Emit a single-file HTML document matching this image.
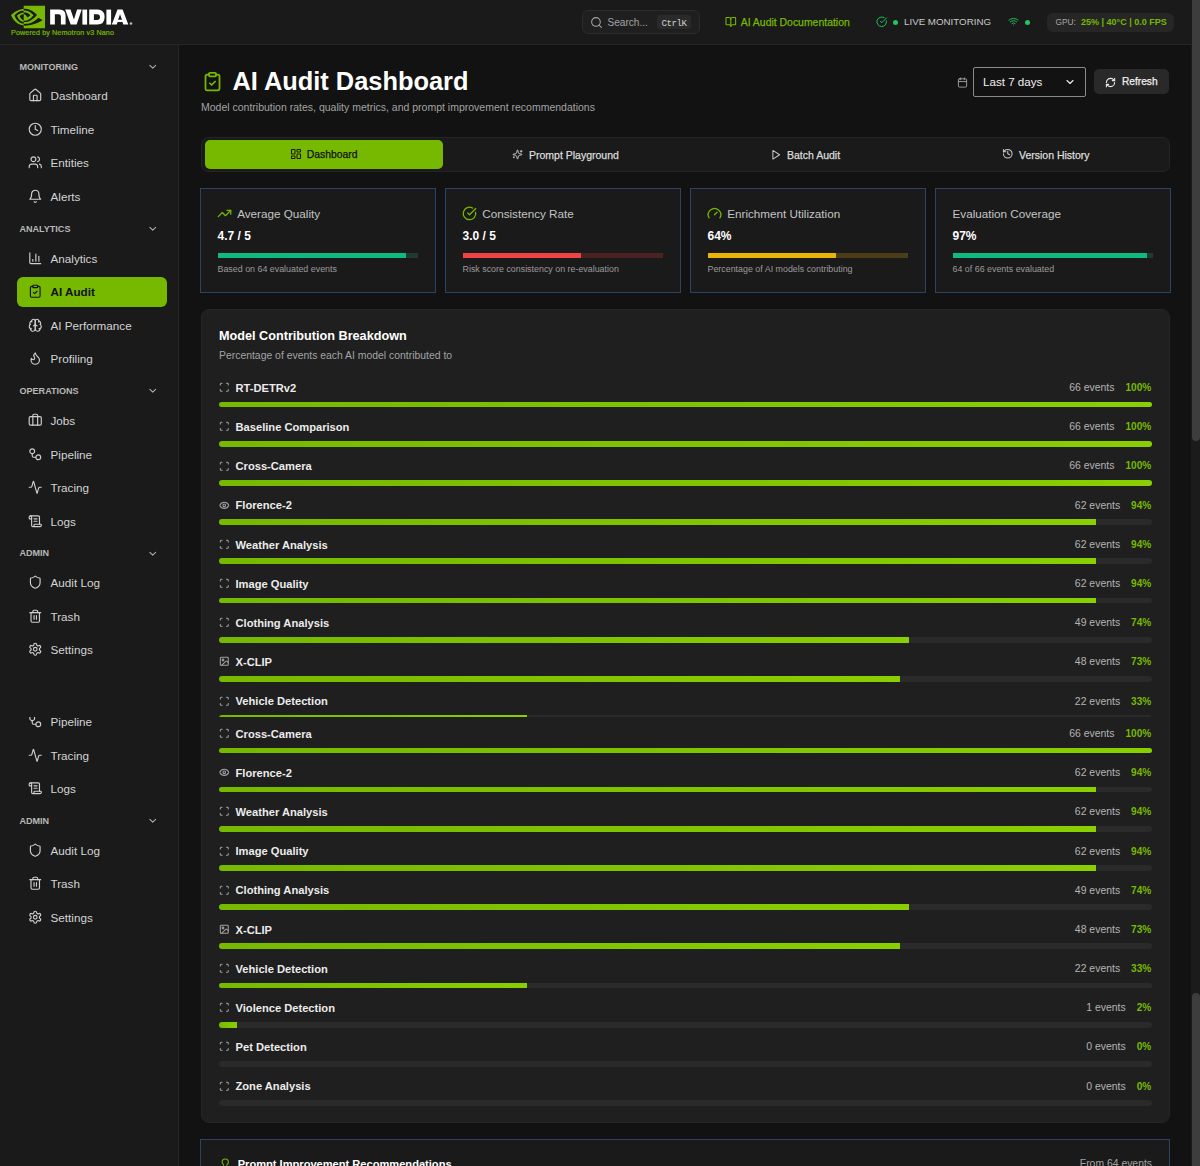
<!DOCTYPE html>
<html><head><meta charset="utf-8">
<style>
*{box-sizing:border-box;margin:0;padding:0}
html,body{width:1200px;height:1166px;overflow:hidden;background:#121212;font-family:"Liberation Sans",sans-serif}
.box,.t,.ic{position:absolute}
.t{white-space:nowrap}
.ic{overflow:visible}
.clip{position:absolute;left:0;width:1191px;overflow:hidden}
.page{position:absolute;left:0;width:1191px;height:1500px}
</style></head><body>
<div class="clip" style="top:0;height:717px"><div class="page" style="top:0">
<div class="box" style="left:0;top:0;width:1191px;height:45px;background:#1a1a1a;border-bottom:1px solid #262626"></div>
<svg class="ic" style="left:11px;top:-0.5px;width:34px;height:34px" viewBox="0 0 24 24"><path fill="#76b900" d="M8.948 8.798v-1.43a6.7 6.7 0 0 1 .424-.018c3.922-.124 6.493 3.374 6.493 3.374s-2.774 3.851-5.75 3.851c-.398 0-.787-.062-1.158-.185v-4.346c1.528.185 1.837.857 2.747 2.385l2.04-1.714s-1.492-1.952-4-1.952a6.016 6.016 0 0 0-.796.035m0-4.735v2.138l.424-.027c5.45-.185 9.010 4.470 9.010 4.470s-4.080 4.964-8.330 4.964c-.37 0-.733-.035-1.095-.097v1.325c.3.035.61.062.91.062 3.957 0 6.820-2.023 9.593-4.408.459.371 2.340 1.263 2.730 1.652-2.633 2.208-8.772 3.984-12.253 3.984-.335 0-.653-.018-.971-.053v1.864H24V4.063zm0 10.326v1.131c-3.657-.654-4.673-4.460-4.673-4.460s1.758-1.944 4.673-2.262v1.237H8.940c-1.528-.186-2.730 1.245-2.730 1.245s.68 2.412 2.739 3.110M2.456 10.900s2.164-3.197 6.500-3.533V6.201C4.153 6.590 0 10.653 0 10.653s2.350 6.802 8.948 7.420v-1.237c-4.840-.6-6.492-5.936-6.492-5.936z"/></svg>
<svg class="ic" style="left:0;top:0;width:140px;height:40px" viewBox="0 0 140 40"><g fill="#ffffff" fill-rule="evenodd"><path d="M50.15 9.6H59.4Q65.6 9.6 65.6 15.8V24.6H60.9V16.4Q60.9 14.2 58.7 14.2H54.85V24.6H50.15Z"/><path d="M65.2 9.6H70.5L73.95 19.6L77.1 9.6H81.7L76.6 24.6H70.7Z"/><rect x="82.4" y="9.6" width="4.7" height="15"/><path d="M89.2 9.6H97.4Q104.6 9.6 104.6 17.1Q104.6 24.6 97.4 24.6H89.2ZM93.9 14.2V20H97.2Q100 20 100 17.1Q100 14.2 97.2 14.2Z"/><rect x="106.4" y="9.6" width="4.7" height="15"/><path d="M111.8 24.6L117.5 9.6H122.6L128.3 24.6H123.3L122.5 22H117.6L116.8 24.6ZM118.1 19.8H122L120.05 14.2Z"/></g><circle cx="131" cy="23.5" r="1.3" fill="#bbbbbb"/></svg>
<div class="t" style="left:11px;top:29.21px;font-size:7.2px;line-height:7.2px;color:#76b900;font-weight:normal;-webkit-text-stroke:0.2px #76b900;letter-spacing:0.1px">Powered by Nemotron v3 Nano</div>
<div class="box" style="left:582px;top:10px;width:118px;height:24px;background:#1f1f1f;border:1px solid #2c2c2c;border-radius:6px"></div>
<svg class="ic" style="left:589.5px;top:15.5px;width:13px;height:13px" viewBox="0 0 24 24" fill="none" stroke="#a3a3a3" stroke-width="1.9" stroke-linecap="round" stroke-linejoin="round"><circle cx="11" cy="11" r="8"/><path d="m21 21-4.3-4.3"/></svg>
<div class="t" style="left:607.5px;top:17.52px;font-size:10.1px;line-height:10.1px;color:#a3a3a3;font-weight:normal">Search...</div>
<div class="box" style="left:657px;top:15px;width:34px;height:14px;background:#2a2a2a;border-radius:3px"></div>
<div class="t" style="left:661.5px;top:18.68px;font-size:9.2px;line-height:9.2px;color:#cfcfcf;font-weight:normal;font-family:'Liberation Mono',monospace;letter-spacing:-0.5px">CtrlK</div>
<svg class="ic" style="left:724.6px;top:16.2px;width:11.6px;height:11.6px" viewBox="0 0 24 24" fill="none" stroke="#76b900" stroke-width="2.2" stroke-linecap="round" stroke-linejoin="round"><path d="M12 7v14"/><path d="M3 18a1 1 0 0 1-1-1V4a1 1 0 0 1 1-1h5a4 4 0 0 1 4 4 4 4 0 0 1 4-4h5a1 1 0 0 1 1 1v13a1 1 0 0 1-1 1h-6a3 3 0 0 0-3 3 3 3 0 0 0-3-3z"/></svg>
<div class="t" style="left:740.7px;top:17.55px;font-size:10.45px;line-height:10.45px;color:#76b900;font-weight:normal;-webkit-text-stroke:0.25px #76b900">AI Audit Documentation</div>
<svg class="ic" style="left:875.5px;top:16px;width:11.5px;height:11.5px" viewBox="0 0 24 24" fill="none" stroke="#22c55e" stroke-width="2" stroke-linecap="round" stroke-linejoin="round"><path d="M21.801 10A10 10 0 1 1 17 3.335"/><path d="m9 11 3 3L22 4"/></svg>
<div class="box" style="left:893px;top:19.5px;width:5px;height:5px;border-radius:50%;background:#22c55e"></div>
<div class="t" style="left:904px;top:17.10px;font-size:9.75px;line-height:9.75px;color:#c8c8c8;font-weight:normal">LIVE MONITORING</div>
<svg class="ic" style="left:1007.5px;top:16px;width:11px;height:11px" viewBox="0 0 24 24" fill="none" stroke="#22c55e" stroke-width="2" stroke-linecap="round" stroke-linejoin="round"><path d="M12 20h.01"/><path d="M2 8.82a15 15 0 0 1 20 0"/><path d="M5 12.859a10 10 0 0 1 14 0"/><path d="M8.5 16.429a5 5 0 0 1 7 0"/></svg>
<div class="box" style="left:1024.5px;top:19.5px;width:5px;height:5px;border-radius:50%;background:#22c55e"></div>
<div class="box" style="left:1047px;top:12.5px;width:127px;height:19px;background:#262626;border-radius:6px"></div>
<div class="t" style="left:1055.5px;top:17.83px;font-size:8.3px;line-height:8.3px;color:#a8a8a8;font-weight:normal">GPU:</div>
<div class="t" style="left:1081px;top:18.18px;font-size:9px;line-height:9px;color:#76b900;font-weight:bold">25% | 40°C | 0.0 FPS</div>
<div class="box" style="left:0;top:45px;width:179px;height:1400px;background:#1a1a1a;border-right:1px solid #272727"></div>
<div class="t" style="left:19.5px;top:62.95px;font-size:9.06px;line-height:9.06px;color:#b8b8b8;font-weight:bold;letter-spacing:0px">MONITORING</div>
<svg class="ic" style="left:147.3px;top:61.199999999999996px;width:11.5px;height:11.5px" viewBox="0 0 24 24" fill="none" stroke="#b0b0b0" stroke-width="2.2" stroke-linecap="round" stroke-linejoin="round"><path d="m6 9 6 6 6-6"/></svg>
<svg class="ic" style="left:27.5px;top:88.39999999999999px;width:14.5px;height:14.5px" viewBox="0 0 24 24" fill="none" stroke="#cfcfcf" stroke-width="1.9" stroke-linecap="round" stroke-linejoin="round"><path d="M15 21v-8a1 1 0 0 0-1-1h-4a1 1 0 0 0-1 1v8"/><path d="M3 10a2 2 0 0 1 .709-1.528l7-5.999a2 2 0 0 1 2.582 0l7 5.999A2 2 0 0 1 21 10v9a2 2 0 0 1-2 2H5a2 2 0 0 1-2-2z"/></svg>
<div class="t" style="left:50.5px;top:90.42px;font-size:11.7px;line-height:11.7px;color:#d4d4d4;font-weight:normal">Dashboard</div>
<svg class="ic" style="left:27.5px;top:121.9px;width:14.5px;height:14.5px" viewBox="0 0 24 24" fill="none" stroke="#cfcfcf" stroke-width="1.9" stroke-linecap="round" stroke-linejoin="round"><circle cx="12" cy="12" r="10"/><polyline points="12 6 12 12 16 14"/></svg>
<div class="t" style="left:50.5px;top:123.92px;font-size:11.7px;line-height:11.7px;color:#d4d4d4;font-weight:normal">Timeline</div>
<svg class="ic" style="left:27.5px;top:155.4px;width:14.5px;height:14.5px" viewBox="0 0 24 24" fill="none" stroke="#cfcfcf" stroke-width="1.9" stroke-linecap="round" stroke-linejoin="round"><path d="M16 21v-2a4 4 0 0 0-4-4H6a4 4 0 0 0-4 4v2"/><circle cx="9" cy="7" r="4"/><path d="M22 21v-2a4 4 0 0 0-3-3.87"/><path d="M16 3.13a4 4 0 0 1 0 7.75"/></svg>
<div class="t" style="left:50.5px;top:157.42px;font-size:11.7px;line-height:11.7px;color:#d4d4d4;font-weight:normal">Entities</div>
<svg class="ic" style="left:27.5px;top:188.9px;width:14.5px;height:14.5px" viewBox="0 0 24 24" fill="none" stroke="#cfcfcf" stroke-width="1.9" stroke-linecap="round" stroke-linejoin="round"><path d="M6 8a6 6 0 0 1 12 0c0 7 3 9 3 9H3s3-2 3-9"/><path d="M10.3 21a1.94 1.94 0 0 0 3.4 0"/></svg>
<div class="t" style="left:50.5px;top:190.92px;font-size:11.7px;line-height:11.7px;color:#d4d4d4;font-weight:normal">Alerts</div>
<div class="t" style="left:19.5px;top:225.05px;font-size:9.06px;line-height:9.06px;color:#b8b8b8;font-weight:bold;letter-spacing:0px">ANALYTICS</div>
<svg class="ic" style="left:147.3px;top:223.3px;width:11.5px;height:11.5px" viewBox="0 0 24 24" fill="none" stroke="#b0b0b0" stroke-width="2.2" stroke-linecap="round" stroke-linejoin="round"><path d="m6 9 6 6 6-6"/></svg>
<svg class="ic" style="left:27.5px;top:250.99999999999997px;width:14.5px;height:14.5px" viewBox="0 0 24 24" fill="none" stroke="#cfcfcf" stroke-width="1.9" stroke-linecap="round" stroke-linejoin="round"><path d="M3 3v16a2 2 0 0 0 2 2h16"/><path d="M18 17V9"/><path d="M13 17V5"/><path d="M8 17v-3"/></svg>
<div class="t" style="left:50.5px;top:253.02px;font-size:11.7px;line-height:11.7px;color:#d4d4d4;font-weight:normal">Analytics</div>
<div class="box" style="left:17px;top:276.6px;width:150px;height:30.6px;background:#76b900;border-radius:6px"></div>
<svg class="ic" style="left:27.5px;top:284.40000000000003px;width:14.5px;height:14.5px" viewBox="0 0 24 24" fill="none" stroke="#111" stroke-width="1.9" stroke-linecap="round" stroke-linejoin="round"><rect width="8" height="4" x="8" y="2" rx="1" ry="1"/><path d="M16 4h2a2 2 0 0 1 2 2v14a2 2 0 0 1-2 2H6a2 2 0 0 1-2-2V6a2 2 0 0 1 2-2h2"/><path d="m9 14 2 2 4-4"/></svg>
<div class="t" style="left:50.5px;top:286.42px;font-size:11.7px;line-height:11.7px;color:#111;font-weight:bold">AI Audit</div>
<svg class="ic" style="left:27.5px;top:317.90000000000003px;width:14.5px;height:14.5px" viewBox="0 0 24 24" fill="none" stroke="#cfcfcf" stroke-width="1.9" stroke-linecap="round" stroke-linejoin="round"><path d="M12 5a3 3 0 1 0-5.997.125 4 4 0 0 0-2.526 5.77 4 4 0 0 0 .556 6.588A4 4 0 1 0 12 18Z"/><path d="M12 5a3 3 0 1 1 5.997.125 4 4 0 0 1 2.526 5.77 4 4 0 0 1-.556 6.588A4 4 0 1 1 12 18Z"/><path d="M15 13a4.5 4.5 0 0 1-3-4 4.5 4.5 0 0 1-3 4"/><path d="M17.599 6.5a3 3 0 0 0 .399-1.375"/><path d="M6.003 5.125A3 3 0 0 0 6.401 6.5"/><path d="M3.477 10.896a4 4 0 0 1 .585-.396"/><path d="M19.938 10.5a4 4 0 0 1 .585.396"/><path d="M6 18a4 4 0 0 1-1.967-.516"/><path d="M19.967 17.484A4 4 0 0 1 18 18"/></svg>
<div class="t" style="left:50.5px;top:319.92px;font-size:11.7px;line-height:11.7px;color:#d4d4d4;font-weight:normal">AI Performance</div>
<svg class="ic" style="left:27.5px;top:351.3px;width:14.5px;height:14.5px" viewBox="0 0 24 24" fill="none" stroke="#cfcfcf" stroke-width="1.9" stroke-linecap="round" stroke-linejoin="round"><path d="M8.5 14.5A2.5 2.5 0 0 0 11 12c0-1.38-.5-2-1-3-1.072-2.143-.224-4.054 2-6 .5 2.5 2 4.9 4 6.5 2 1.6 3 3.5 3 5.5a7 7 0 1 1-14 0c0-1.153.433-2.294 1-3a2.5 2.5 0 0 0 2.5 2.5z"/></svg>
<div class="t" style="left:50.5px;top:353.32px;font-size:11.7px;line-height:11.7px;color:#d4d4d4;font-weight:normal">Profiling</div>
<div class="t" style="left:19.5px;top:387.15px;font-size:9.06px;line-height:9.06px;color:#b8b8b8;font-weight:bold;letter-spacing:0px">OPERATIONS</div>
<svg class="ic" style="left:147.3px;top:385.4px;width:11.5px;height:11.5px" viewBox="0 0 24 24" fill="none" stroke="#b0b0b0" stroke-width="2.2" stroke-linecap="round" stroke-linejoin="round"><path d="m6 9 6 6 6-6"/></svg>
<svg class="ic" style="left:27.5px;top:413.20000000000005px;width:14.5px;height:14.5px" viewBox="0 0 24 24" fill="none" stroke="#cfcfcf" stroke-width="1.9" stroke-linecap="round" stroke-linejoin="round"><path d="M16 20V4a2 2 0 0 0-2-2h-4a2 2 0 0 0-2 2v16"/><rect width="20" height="14" x="2" y="6" rx="2"/></svg>
<div class="t" style="left:50.5px;top:415.22px;font-size:11.7px;line-height:11.7px;color:#d4d4d4;font-weight:normal">Jobs</div>
<svg class="ic" style="left:27.5px;top:446.8px;width:14.5px;height:14.5px" viewBox="0 0 24 24" fill="none" stroke="#cfcfcf" stroke-width="1.9" stroke-linecap="round" stroke-linejoin="round"><rect width="8" height="8" x="3" y="3" rx="4"/><path d="M7 11v4a2 2 0 0 0 2 2h4"/><rect width="8" height="8" x="13" y="13" rx="4"/></svg>
<div class="t" style="left:50.5px;top:448.82px;font-size:11.7px;line-height:11.7px;color:#d4d4d4;font-weight:normal">Pipeline</div>
<svg class="ic" style="left:27.5px;top:480.40000000000003px;width:14.5px;height:14.5px" viewBox="0 0 24 24" fill="none" stroke="#cfcfcf" stroke-width="1.9" stroke-linecap="round" stroke-linejoin="round"><path d="M22 12h-2.48a2 2 0 0 0-1.93 1.46l-2.35 8.36a.25.25 0 0 1-.48 0L9.24 2.18a.25.25 0 0 0-.48 0l-2.35 8.36A2 2 0 0 1 4.49 12H2"/></svg>
<div class="t" style="left:50.5px;top:482.42px;font-size:11.7px;line-height:11.7px;color:#d4d4d4;font-weight:normal">Tracing</div>
<svg class="ic" style="left:27.5px;top:513.8000000000001px;width:14.5px;height:14.5px" viewBox="0 0 24 24" fill="none" stroke="#cfcfcf" stroke-width="1.9" stroke-linecap="round" stroke-linejoin="round"><path d="M15 12h-5"/><path d="M15 8h-5"/><path d="M19 17V5a2 2 0 0 0-2-2H4"/><path d="M8 21h12a2 2 0 0 0 2-2v-1a1 1 0 0 0-1-1H11a1 1 0 0 0-1 1v1a2 2 0 1 1-4 0V5a2 2 0 1 0-4 0v2a1 1 0 0 0 1 1h3"/></svg>
<div class="t" style="left:50.5px;top:515.82px;font-size:11.7px;line-height:11.7px;color:#d4d4d4;font-weight:normal">Logs</div>
<div class="t" style="left:19.5px;top:549.25px;font-size:9.06px;line-height:9.06px;color:#b8b8b8;font-weight:bold;letter-spacing:0px">ADMIN</div>
<svg class="ic" style="left:147.3px;top:547.5px;width:11.5px;height:11.5px" viewBox="0 0 24 24" fill="none" stroke="#b0b0b0" stroke-width="2.2" stroke-linecap="round" stroke-linejoin="round"><path d="m6 9 6 6 6-6"/></svg>
<svg class="ic" style="left:27.5px;top:575.2px;width:14.5px;height:14.5px" viewBox="0 0 24 24" fill="none" stroke="#cfcfcf" stroke-width="1.9" stroke-linecap="round" stroke-linejoin="round"><path d="M20 13c0 5-3.5 7.5-7.66 8.95a1 1 0 0 1-.67-.01C7.5 20.5 4 18 4 13V6a1 1 0 0 1 1-1c2 0 4.5-1.2 6.24-2.72a1.17 1.17 0 0 1 1.52 0C14.510 3.81 17 5 19 5a1 1 0 0 1 1 1z"/></svg>
<div class="t" style="left:50.5px;top:577.22px;font-size:11.7px;line-height:11.7px;color:#d4d4d4;font-weight:normal">Audit Log</div>
<svg class="ic" style="left:27.5px;top:608.9px;width:14.5px;height:14.5px" viewBox="0 0 24 24" fill="none" stroke="#cfcfcf" stroke-width="1.9" stroke-linecap="round" stroke-linejoin="round"><path d="M3 6h18"/><path d="M19 6v14c0 1-1 2-2 2H7c-1 0-2-1-2-2V6"/><path d="M8 6V4c0-1 1-2 2-2h4c1 0 2 1 2 2v2"/><line x1="10" x2="10" y1="11" y2="17"/><line x1="14" x2="14" y1="11" y2="17"/></svg>
<div class="t" style="left:50.5px;top:610.92px;font-size:11.7px;line-height:11.7px;color:#d4d4d4;font-weight:normal">Trash</div>
<svg class="ic" style="left:27.5px;top:642.2px;width:14.5px;height:14.5px" viewBox="0 0 24 24" fill="none" stroke="#cfcfcf" stroke-width="1.9" stroke-linecap="round" stroke-linejoin="round"><path d="M12.22 2h-.44a2 2 0 0 0-2 2v.18a2 2 0 0 1-1 1.730l-.43.25a2 2 0 0 1-2 0l-.15-.08a2 2 0 0 0-2.73.73l-.22.38a2 2 0 0 0 .73 2.73l.15.1a2 2 0 0 1 1 1.72v.51a2 2 0 0 1-1 1.74l-.15.09a2 2 0 0 0-.73 2.73l.22.38a2 2 0 0 0 2.73.73l.15-.08a2 2 0 0 1 2 0l.43.25a2 2 0 0 1 1 1.73V20a2 2 0 0 0 2 2h.44a2 2 0 0 0 2-2v-.18a2 2 0 0 1 1-1.73l.43-.25a2 2 0 0 1 2 0l.15.08a2 2 0 0 0 2.73-.73l.22-.39a2 2 0 0 0-.73-2.73l-.15-.08a2 2 0 0 1-1-1.74v-.5a2 2 0 0 1 1-1.74l.15-.09a2 2 0 0 0 .73-2.73l-.22-.38a2 2 0 0 0-2.73-.73l-.15.08a2 2 0 0 1-2 0l-.43-.25a2 2 0 0 1-1-1.73V4a2 2 0 0 0-2-2z"/><circle cx="12" cy="12" r="3"/></svg>
<div class="t" style="left:50.5px;top:644.22px;font-size:11.7px;line-height:11.7px;color:#d4d4d4;font-weight:normal">Settings</div>
<svg class="ic" style="left:202px;top:70.5px;width:21px;height:21px" viewBox="0 0 24 24" fill="none" stroke="#76b900" stroke-width="2" stroke-linecap="round" stroke-linejoin="round"><rect width="8" height="4" x="8" y="2" rx="1" ry="1"/><path d="M16 4h2a2 2 0 0 1 2 2v14a2 2 0 0 1-2 2H6a2 2 0 0 1-2-2V6a2 2 0 0 1 2-2h2"/><path d="m9 14 2 2 4-4"/></svg>
<div class="t" style="left:232.4px;top:68.70px;font-size:25.4px;line-height:25.4px;color:#ffffff;font-weight:bold">AI Audit Dashboard</div>
<div class="t" style="left:201px;top:101.72px;font-size:10.5px;line-height:10.5px;color:#a3a3a3;font-weight:normal">Model contribution rates, quality metrics, and prompt improvement recommendations</div>
<svg class="ic" style="left:956.5px;top:76.5px;width:11px;height:11px" viewBox="0 0 24 24" fill="none" stroke="#a3a3a3" stroke-width="2" stroke-linecap="round" stroke-linejoin="round"><path d="M8 2v4"/><path d="M16 2v4"/><rect width="18" height="18" x="3" y="4" rx="2"/><path d="M3 10h18"/></svg>
<div class="box" style="left:973px;top:67px;width:113px;height:30px;border:1px solid #8a8a8a;border-radius:2px;background:#121212"></div>
<div class="t" style="left:983px;top:76.17px;font-size:11.6px;line-height:11.6px;color:#f0f0f0;font-weight:normal">Last 7 days</div>
<svg class="ic" style="left:1063.5px;top:76px;width:12px;height:12px" viewBox="0 0 24 24" fill="none" stroke="#e8e8e8" stroke-width="2.3" stroke-linecap="round" stroke-linejoin="round"><path d="m6 9 6 6 6-6"/></svg>
<div class="box" style="left:1094px;top:69px;width:75px;height:25px;background:#292929;border-radius:5px"></div>
<svg class="ic" style="left:1105px;top:76.5px;width:11px;height:11px" viewBox="0 0 24 24" fill="none" stroke="#e8e8e8" stroke-width="2.4" stroke-linecap="round" stroke-linejoin="round"><path d="M3 12a9 9 0 0 1 9-9 9.75 9.75 0 0 1 6.74 2.74L21 8"/><path d="M21 3v5h-5"/><path d="M21 12a9 9 0 0 1-9 9 9.75 9.75 0 0 1-6.74-2.74L3 16"/><path d="M8 16H3v5"/></svg>
<div class="t" style="left:1122px;top:77.39px;font-size:10.17px;line-height:10.17px;color:#f0f0f0;font-weight:normal;-webkit-text-stroke:0.25px #f0f0f0">Refresh</div>
<div class="box" style="left:201px;top:137px;width:969px;height:35px;background:#1a1a1a;border:1px solid #242424;border-radius:7px"></div>
<div class="box" style="left:205px;top:140px;width:238px;height:28.5px;background:#76b900;border-radius:5px"></div>
<svg class="ic" style="left:289.5px;top:148px;width:12px;height:12px" viewBox="0 0 24 24" fill="none" stroke="#1a1a1a" stroke-width="2.1" stroke-linecap="round" stroke-linejoin="round"><rect width="7" height="9" x="3" y="3" rx="1"/><rect width="7" height="5" x="14" y="3" rx="1"/><rect width="7" height="9" x="14" y="12" rx="1"/><rect width="7" height="5" x="3" y="16" rx="1"/></svg>
<div class="t" style="left:306.7px;top:149.58px;font-size:10.38px;line-height:10.38px;color:#111111;font-weight:normal;-webkit-text-stroke:0.25px #111">Dashboard</div>
<svg class="ic" style="left:511.5px;top:148.5px;width:11px;height:11px" viewBox="0 0 24 24" fill="none" stroke="#c8c8c8" stroke-width="2" stroke-linecap="round" stroke-linejoin="round"><path d="M9.937 15.5A2 2 0 0 0 8.5 14.063l-6.135-1.582a.5.5 0 0 1 0-.962L8.5 9.936A2 2 0 0 0 9.937 8.5l1.582-6.135a.5.5 0 0 1 .963 0L14.063 8.5A2 2 0 0 0 15.5 9.937l6.135 1.581a.5.5 0 0 1 0 .964L15.5 14.063a2 2 0 0 0-1.437 1.437l-1.582 6.135a.5.5 0 0 1-.963 0z"/><path d="M20 3v4"/><path d="M22 5h-4"/><path d="M4 17v2"/><path d="M5 18H3"/></svg>
<div class="t" style="left:529px;top:149.52px;font-size:10.5px;line-height:10.5px;color:#dcdcdc;font-weight:normal;-webkit-text-stroke:0.25px #dcdcdc">Prompt Playground</div>
<svg class="ic" style="left:770px;top:148.5px;width:11.5px;height:11.5px" viewBox="0 0 24 24" fill="none" stroke="#c8c8c8" stroke-width="2.1" stroke-linecap="round" stroke-linejoin="round"><polygon points="6 3 20 12 6 21 6 3"/></svg>
<div class="t" style="left:787px;top:149.52px;font-size:10.5px;line-height:10.5px;color:#dcdcdc;font-weight:normal;-webkit-text-stroke:0.25px #dcdcdc">Batch Audit</div>
<svg class="ic" style="left:1002px;top:148.3px;width:11.5px;height:11.5px" viewBox="0 0 24 24" fill="none" stroke="#c8c8c8" stroke-width="2.2" stroke-linecap="round" stroke-linejoin="round"><path d="M3 12a9 9 0 1 0 9-9 9.75 9.75 0 0 0-6.74 2.74L3 8"/><path d="M3 3v5h5"/><path d="M12 7v5l4 2"/></svg>
<div class="t" style="left:1019px;top:149.52px;font-size:10.5px;line-height:10.5px;color:#dcdcdc;font-weight:normal;-webkit-text-stroke:0.25px #dcdcdc">Version History</div>
<div class="box" style="left:200px;top:188px;width:235.5px;height:105px;background:#1a1a1a;border:1px solid #2a4466"></div>
<svg class="ic" style="left:217.2px;top:206px;width:15px;height:15px" viewBox="0 0 24 24" fill="none" stroke="#76b900" stroke-width="2" stroke-linecap="round" stroke-linejoin="round"><polyline points="22 7 13.5 15.5 8.5 10.5 2 17"/><polyline points="16 7 22 7 22 13"/></svg>
<div class="t" style="left:237.2px;top:207.92px;font-size:11.7px;line-height:11.7px;color:#c4c4c4;font-weight:normal">Average Quality</div>
<div class="t" style="left:217.5px;top:229.97px;font-size:12px;line-height:12px;color:#ffffff;font-weight:bold">4.7 / 5</div>
<div class="box" style="left:217.5px;top:252.6px;width:200px;height:5.7px;background:#1f3b31"><div style="width:94%;height:5.7px;background:#10b981"></div></div>
<div class="t" style="left:217.5px;top:265.13px;font-size:8.9px;line-height:8.9px;color:#9a9a9a;font-weight:normal">Based on 64 evaluated events</div>
<div class="box" style="left:445px;top:188px;width:235.5px;height:105px;background:#1a1a1a;border:1px solid #2a4466"></div>
<svg class="ic" style="left:462.2px;top:206px;width:15px;height:15px" viewBox="0 0 24 24" fill="none" stroke="#76b900" stroke-width="2" stroke-linecap="round" stroke-linejoin="round"><path d="M21.801 10A10 10 0 1 1 17 3.335"/><path d="m9 11 3 3L22 4"/></svg>
<div class="t" style="left:482.2px;top:207.92px;font-size:11.7px;line-height:11.7px;color:#c4c4c4;font-weight:normal">Consistency Rate</div>
<div class="t" style="left:462.5px;top:229.97px;font-size:12px;line-height:12px;color:#ffffff;font-weight:bold">3.0 / 5</div>
<div class="box" style="left:462.5px;top:252.6px;width:200px;height:5.7px;background:#4a2222"><div style="width:59%;height:5.7px;background:#ef4444"></div></div>
<div class="t" style="left:462.5px;top:265.13px;font-size:8.9px;line-height:8.9px;color:#9a9a9a;font-weight:normal">Risk score consistency on re-evaluation</div>
<div class="box" style="left:690px;top:188px;width:235.5px;height:105px;background:#1a1a1a;border:1px solid #2a4466"></div>
<svg class="ic" style="left:707.2px;top:206px;width:15px;height:15px" viewBox="0 0 24 24" fill="none" stroke="#76b900" stroke-width="2" stroke-linecap="round" stroke-linejoin="round"><path d="m12 14 4-4"/><path d="M3.34 19a10 10 0 1 1 17.32 0"/></svg>
<div class="t" style="left:727.2px;top:207.92px;font-size:11.7px;line-height:11.7px;color:#c4c4c4;font-weight:normal">Enrichment Utilization</div>
<div class="t" style="left:707.5px;top:229.97px;font-size:12px;line-height:12px;color:#ffffff;font-weight:bold">64%</div>
<div class="box" style="left:707.5px;top:252.6px;width:200px;height:5.7px;background:#4a3d17"><div style="width:64%;height:5.7px;background:#eab308"></div></div>
<div class="t" style="left:707.5px;top:265.13px;font-size:8.9px;line-height:8.9px;color:#9a9a9a;font-weight:normal">Percentage of AI models contributing</div>
<div class="box" style="left:935px;top:188px;width:235.5px;height:105px;background:#1a1a1a;border:1px solid #2a4466"></div>
<div class="t" style="left:952.5px;top:207.92px;font-size:11.7px;line-height:11.7px;color:#c4c4c4;font-weight:normal">Evaluation Coverage</div>
<div class="t" style="left:952.5px;top:229.97px;font-size:12px;line-height:12px;color:#ffffff;font-weight:bold">97%</div>
<div class="box" style="left:952.5px;top:252.6px;width:200px;height:5.7px;background:#1f3b31"><div style="width:97%;height:5.7px;background:#10b981"></div></div>
<div class="t" style="left:952.5px;top:265.13px;font-size:8.9px;line-height:8.9px;color:#9a9a9a;font-weight:normal">64 of 66 events evaluated</div>
<div class="box" style="left:201px;top:309px;width:969px;height:546px;background:#1f1f1f;border:1px solid #252525;border-radius:8px"></div>
<div class="t" style="left:219px;top:330.13px;font-size:12.67px;line-height:12.67px;color:#ffffff;font-weight:bold">Model Contribution Breakdown</div>
<div class="t" style="left:219px;top:351.26px;font-size:10.42px;line-height:10.42px;color:#a3a3a3;font-weight:normal">Percentage of events each AI model contributed to</div>
<svg class="ic" style="left:218.7px;top:382.2px;width:10.6px;height:10.6px" viewBox="0 0 24 24" fill="none" stroke="#a0a0a0" stroke-width="2.4" stroke-linecap="round" stroke-linejoin="round"><path d="M3 7V5a2 2 0 0 1 2-2h2"/><path d="M17 3h2a2 2 0 0 1 2 2v2"/><path d="M21 17v2a2 2 0 0 1-2 2h-2"/><path d="M7 21H5a2 2 0 0 1-2-2v-2"/></svg>
<div class="t" style="left:235.5px;top:382.90px;font-size:11.15px;line-height:11.15px;color:#ececec;font-weight:bold">RT-DETRv2</div>
<div class="t" style="right:39.700000000000045px;top:383.15px;font-size:10.45px;line-height:10.45px;display:flex;gap:11px"><span style="color:#b4b4b4">66 events</span><span style="color:#76b900;font-weight:bold;font-size:10.1px">100%</span></div>
<div class="box" style="left:218.5px;top:401.80px;width:933.5px;height:5.7px;background:#2a2a2a;border-radius:3px;overflow:hidden"><div style="width:100%;height:5.7px;background:linear-gradient(to right,#76b900,#8acf00)"></div></div>
<svg class="ic" style="left:218.7px;top:421.37px;width:10.6px;height:10.6px" viewBox="0 0 24 24" fill="none" stroke="#a0a0a0" stroke-width="2.4" stroke-linecap="round" stroke-linejoin="round"><path d="M3 7V5a2 2 0 0 1 2-2h2"/><path d="M17 3h2a2 2 0 0 1 2 2v2"/><path d="M21 17v2a2 2 0 0 1-2 2h-2"/><path d="M7 21H5a2 2 0 0 1-2-2v-2"/></svg>
<div class="t" style="left:235.5px;top:422.07px;font-size:11.15px;line-height:11.15px;color:#ececec;font-weight:bold">Baseline Comparison</div>
<div class="t" style="right:39.700000000000045px;top:422.32px;font-size:10.45px;line-height:10.45px;display:flex;gap:11px"><span style="color:#b4b4b4">66 events</span><span style="color:#76b900;font-weight:bold;font-size:10.1px">100%</span></div>
<div class="box" style="left:218.5px;top:440.97px;width:933.5px;height:5.7px;background:#2a2a2a;border-radius:3px;overflow:hidden"><div style="width:100%;height:5.7px;background:linear-gradient(to right,#76b900,#8acf00)"></div></div>
<svg class="ic" style="left:218.7px;top:460.53999999999996px;width:10.6px;height:10.6px" viewBox="0 0 24 24" fill="none" stroke="#a0a0a0" stroke-width="2.4" stroke-linecap="round" stroke-linejoin="round"><path d="M3 7V5a2 2 0 0 1 2-2h2"/><path d="M17 3h2a2 2 0 0 1 2 2v2"/><path d="M21 17v2a2 2 0 0 1-2 2h-2"/><path d="M7 21H5a2 2 0 0 1-2-2v-2"/></svg>
<div class="t" style="left:235.5px;top:461.24px;font-size:11.15px;line-height:11.15px;color:#ececec;font-weight:bold">Cross-Camera</div>
<div class="t" style="right:39.700000000000045px;top:461.49px;font-size:10.45px;line-height:10.45px;display:flex;gap:11px"><span style="color:#b4b4b4">66 events</span><span style="color:#76b900;font-weight:bold;font-size:10.1px">100%</span></div>
<div class="box" style="left:218.5px;top:480.14px;width:933.5px;height:5.7px;background:#2a2a2a;border-radius:3px;overflow:hidden"><div style="width:100%;height:5.7px;background:linear-gradient(to right,#76b900,#8acf00)"></div></div>
<svg class="ic" style="left:218.7px;top:499.71px;width:10.6px;height:10.6px" viewBox="0 0 24 24" fill="none" stroke="#a0a0a0" stroke-width="2.4" stroke-linecap="round" stroke-linejoin="round"><path d="M2.062 12.348a1 1 0 0 1 0-.696 10.750 10.75 0 0 1 19.876 0 1 1 0 0 1 0 .696 10.75 10.75 0 0 1-19.876 0"/><circle cx="12" cy="12" r="3"/></svg>
<div class="t" style="left:235.5px;top:500.41px;font-size:11.15px;line-height:11.15px;color:#ececec;font-weight:bold">Florence-2</div>
<div class="t" style="right:39.700000000000045px;top:500.66px;font-size:10.45px;line-height:10.45px;display:flex;gap:11px"><span style="color:#b4b4b4">62 events</span><span style="color:#76b900;font-weight:bold;font-size:10.1px">94%</span></div>
<div class="box" style="left:218.5px;top:519.31px;width:933.5px;height:5.7px;background:#2a2a2a;border-radius:3px;overflow:hidden"><div style="width:94%;height:5.7px;background:linear-gradient(to right,#76b900,#8acf00)"></div></div>
<svg class="ic" style="left:218.7px;top:538.88px;width:10.6px;height:10.6px" viewBox="0 0 24 24" fill="none" stroke="#a0a0a0" stroke-width="2.4" stroke-linecap="round" stroke-linejoin="round"><path d="M3 7V5a2 2 0 0 1 2-2h2"/><path d="M17 3h2a2 2 0 0 1 2 2v2"/><path d="M21 17v2a2 2 0 0 1-2 2h-2"/><path d="M7 21H5a2 2 0 0 1-2-2v-2"/></svg>
<div class="t" style="left:235.5px;top:539.58px;font-size:11.15px;line-height:11.15px;color:#ececec;font-weight:bold">Weather Analysis</div>
<div class="t" style="right:39.700000000000045px;top:539.83px;font-size:10.45px;line-height:10.45px;display:flex;gap:11px"><span style="color:#b4b4b4">62 events</span><span style="color:#76b900;font-weight:bold;font-size:10.1px">94%</span></div>
<div class="box" style="left:218.5px;top:558.48px;width:933.5px;height:5.7px;background:#2a2a2a;border-radius:3px;overflow:hidden"><div style="width:94%;height:5.7px;background:linear-gradient(to right,#76b900,#8acf00)"></div></div>
<svg class="ic" style="left:218.7px;top:578.0500000000001px;width:10.6px;height:10.6px" viewBox="0 0 24 24" fill="none" stroke="#a0a0a0" stroke-width="2.4" stroke-linecap="round" stroke-linejoin="round"><path d="M3 7V5a2 2 0 0 1 2-2h2"/><path d="M17 3h2a2 2 0 0 1 2 2v2"/><path d="M21 17v2a2 2 0 0 1-2 2h-2"/><path d="M7 21H5a2 2 0 0 1-2-2v-2"/></svg>
<div class="t" style="left:235.5px;top:578.75px;font-size:11.15px;line-height:11.15px;color:#ececec;font-weight:bold">Image Quality</div>
<div class="t" style="right:39.700000000000045px;top:579.00px;font-size:10.45px;line-height:10.45px;display:flex;gap:11px"><span style="color:#b4b4b4">62 events</span><span style="color:#76b900;font-weight:bold;font-size:10.1px">94%</span></div>
<div class="box" style="left:218.5px;top:597.65px;width:933.5px;height:5.7px;background:#2a2a2a;border-radius:3px;overflow:hidden"><div style="width:94%;height:5.7px;background:linear-gradient(to right,#76b900,#8acf00)"></div></div>
<svg class="ic" style="left:218.7px;top:617.22px;width:10.6px;height:10.6px" viewBox="0 0 24 24" fill="none" stroke="#a0a0a0" stroke-width="2.4" stroke-linecap="round" stroke-linejoin="round"><path d="M3 7V5a2 2 0 0 1 2-2h2"/><path d="M17 3h2a2 2 0 0 1 2 2v2"/><path d="M21 17v2a2 2 0 0 1-2 2h-2"/><path d="M7 21H5a2 2 0 0 1-2-2v-2"/></svg>
<div class="t" style="left:235.5px;top:617.92px;font-size:11.15px;line-height:11.15px;color:#ececec;font-weight:bold">Clothing Analysis</div>
<div class="t" style="right:39.700000000000045px;top:618.17px;font-size:10.45px;line-height:10.45px;display:flex;gap:11px"><span style="color:#b4b4b4">49 events</span><span style="color:#76b900;font-weight:bold;font-size:10.1px">74%</span></div>
<div class="box" style="left:218.5px;top:636.82px;width:933.5px;height:5.7px;background:#2a2a2a;border-radius:3px;overflow:hidden"><div style="width:74%;height:5.7px;background:linear-gradient(to right,#76b900,#8acf00)"></div></div>
<svg class="ic" style="left:218.7px;top:656.39px;width:10.6px;height:10.6px" viewBox="0 0 24 24" fill="none" stroke="#a0a0a0" stroke-width="2.4" stroke-linecap="round" stroke-linejoin="round"><rect width="18" height="18" x="3" y="3" rx="2" ry="2"/><circle cx="9" cy="9" r="2"/><path d="m21 15-3.086-3.086a2 2 0 0 0-2.828 0L6 21"/></svg>
<div class="t" style="left:235.5px;top:657.09px;font-size:11.15px;line-height:11.15px;color:#ececec;font-weight:bold">X-CLIP</div>
<div class="t" style="right:39.700000000000045px;top:657.34px;font-size:10.45px;line-height:10.45px;display:flex;gap:11px"><span style="color:#b4b4b4">48 events</span><span style="color:#76b900;font-weight:bold;font-size:10.1px">73%</span></div>
<div class="box" style="left:218.5px;top:675.99px;width:933.5px;height:5.7px;background:#2a2a2a;border-radius:3px;overflow:hidden"><div style="width:73%;height:5.7px;background:linear-gradient(to right,#76b900,#8acf00)"></div></div>
<svg class="ic" style="left:218.7px;top:695.5600000000001px;width:10.6px;height:10.6px" viewBox="0 0 24 24" fill="none" stroke="#a0a0a0" stroke-width="2.4" stroke-linecap="round" stroke-linejoin="round"><path d="M3 7V5a2 2 0 0 1 2-2h2"/><path d="M17 3h2a2 2 0 0 1 2 2v2"/><path d="M21 17v2a2 2 0 0 1-2 2h-2"/><path d="M7 21H5a2 2 0 0 1-2-2v-2"/></svg>
<div class="t" style="left:235.5px;top:696.26px;font-size:11.15px;line-height:11.15px;color:#ececec;font-weight:bold">Vehicle Detection</div>
<div class="t" style="right:39.700000000000045px;top:696.51px;font-size:10.45px;line-height:10.45px;display:flex;gap:11px"><span style="color:#b4b4b4">22 events</span><span style="color:#76b900;font-weight:bold;font-size:10.1px">33%</span></div>
<div class="box" style="left:218.5px;top:715.16px;width:933.5px;height:5.7px;background:#2a2a2a;border-radius:3px;overflow:hidden"><div style="width:33%;height:5.7px;background:linear-gradient(to right,#76b900,#8acf00)"></div></div>
<svg class="ic" style="left:218.7px;top:734.73px;width:10.6px;height:10.6px" viewBox="0 0 24 24" fill="none" stroke="#a0a0a0" stroke-width="2.4" stroke-linecap="round" stroke-linejoin="round"><path d="M3 7V5a2 2 0 0 1 2-2h2"/><path d="M17 3h2a2 2 0 0 1 2 2v2"/><path d="M21 17v2a2 2 0 0 1-2 2h-2"/><path d="M7 21H5a2 2 0 0 1-2-2v-2"/></svg>
<div class="t" style="left:235.5px;top:735.43px;font-size:11.15px;line-height:11.15px;color:#ececec;font-weight:bold">Violence Detection</div>
<div class="t" style="right:39.700000000000045px;top:735.68px;font-size:10.45px;line-height:10.45px;display:flex;gap:11px"><span style="color:#b4b4b4">1 events</span><span style="color:#76b900;font-weight:bold;font-size:10.1px">2%</span></div>
<div class="box" style="left:218.5px;top:754.33px;width:933.5px;height:5.7px;background:#2a2a2a;border-radius:3px;overflow:hidden"><div style="width:2%;height:5.7px;background:linear-gradient(to right,#76b900,#8acf00)"></div></div>
<svg class="ic" style="left:218.7px;top:773.9px;width:10.6px;height:10.6px" viewBox="0 0 24 24" fill="none" stroke="#a0a0a0" stroke-width="2.4" stroke-linecap="round" stroke-linejoin="round"><path d="M3 7V5a2 2 0 0 1 2-2h2"/><path d="M17 3h2a2 2 0 0 1 2 2v2"/><path d="M21 17v2a2 2 0 0 1-2 2h-2"/><path d="M7 21H5a2 2 0 0 1-2-2v-2"/></svg>
<div class="t" style="left:235.5px;top:774.60px;font-size:11.15px;line-height:11.15px;color:#ececec;font-weight:bold">Pet Detection</div>
<div class="t" style="right:39.700000000000045px;top:774.85px;font-size:10.45px;line-height:10.45px;display:flex;gap:11px"><span style="color:#b4b4b4">0 events</span><span style="color:#76b900;font-weight:bold;font-size:10.1px">0%</span></div>
<div class="box" style="left:218.5px;top:793.50px;width:933.5px;height:5.7px;background:#2a2a2a;border-radius:3px;overflow:hidden"><div style="width:0%;height:5.7px;background:linear-gradient(to right,#76b900,#8acf00)"></div></div>
<svg class="ic" style="left:218.7px;top:813.07px;width:10.6px;height:10.6px" viewBox="0 0 24 24" fill="none" stroke="#a0a0a0" stroke-width="2.4" stroke-linecap="round" stroke-linejoin="round"><path d="M3 7V5a2 2 0 0 1 2-2h2"/><path d="M17 3h2a2 2 0 0 1 2 2v2"/><path d="M21 17v2a2 2 0 0 1-2 2h-2"/><path d="M7 21H5a2 2 0 0 1-2-2v-2"/></svg>
<div class="t" style="left:235.5px;top:813.77px;font-size:11.15px;line-height:11.15px;color:#ececec;font-weight:bold">Zone Analysis</div>
<div class="t" style="right:39.700000000000045px;top:814.02px;font-size:10.45px;line-height:10.45px;display:flex;gap:11px"><span style="color:#b4b4b4">0 events</span><span style="color:#76b900;font-weight:bold;font-size:10.1px">0%</span></div>
<div class="box" style="left:218.5px;top:832.67px;width:933.5px;height:5.7px;background:#2a2a2a;border-radius:3px;overflow:hidden"><div style="width:0%;height:5.7px;background:linear-gradient(to right,#76b900,#8acf00)"></div></div>
<div class="box" style="left:200px;top:871.5px;width:970px;height:300px;background:#1a1a1a;border:1px solid #2a4466"></div>
<svg class="ic" style="left:218.5px;top:890.5px;width:12.5px;height:12.5px" viewBox="0 0 24 24" fill="none" stroke="#76b900" stroke-width="2" stroke-linecap="round" stroke-linejoin="round"><path d="M15 14c.2-1 .7-1.7 1.5-2.5 1-.9 1.5-2.2 1.5-3.5A6 6 0 0 0 6 8c0 1 .2 2.2 1.5 3.5.7.7 1.3 1.5 1.5 2.5"/><path d="M9 18h6"/><path d="M10 22h4"/></svg>
<div class="t" style="left:237.7px;top:891.10px;font-size:11.1px;line-height:11.1px;color:#ffffff;font-weight:bold">Prompt Improvement Recommendations</div>
<div class="t" style="right:39px;top:891.70px;font-size:10.4px;line-height:10.4px;color:#a3a3a3;font-weight:normal">From 64 events</div>
</div></div>
<div class="clip" style="top:717px;height:449px"><div class="page" style="top:-449.5px">
<div class="box" style="left:0;top:0;width:1191px;height:45px;background:#1a1a1a;border-bottom:1px solid #262626"></div>
<svg class="ic" style="left:11px;top:-0.5px;width:34px;height:34px" viewBox="0 0 24 24"><path fill="#76b900" d="M8.948 8.798v-1.43a6.7 6.7 0 0 1 .424-.018c3.922-.124 6.493 3.374 6.493 3.374s-2.774 3.851-5.75 3.851c-.398 0-.787-.062-1.158-.185v-4.346c1.528.185 1.837.857 2.747 2.385l2.04-1.714s-1.492-1.952-4-1.952a6.016 6.016 0 0 0-.796.035m0-4.735v2.138l.424-.027c5.45-.185 9.010 4.470 9.010 4.470s-4.080 4.964-8.330 4.964c-.37 0-.733-.035-1.095-.097v1.325c.3.035.61.062.91.062 3.957 0 6.820-2.023 9.593-4.408.459.371 2.340 1.263 2.730 1.652-2.633 2.208-8.772 3.984-12.253 3.984-.335 0-.653-.018-.971-.053v1.864H24V4.063zm0 10.326v1.131c-3.657-.654-4.673-4.460-4.673-4.460s1.758-1.944 4.673-2.262v1.237H8.940c-1.528-.186-2.730 1.245-2.730 1.245s.68 2.412 2.739 3.110M2.456 10.900s2.164-3.197 6.500-3.533V6.201C4.153 6.590 0 10.653 0 10.653s2.350 6.802 8.948 7.420v-1.237c-4.840-.6-6.492-5.936-6.492-5.936z"/></svg>
<svg class="ic" style="left:0;top:0;width:140px;height:40px" viewBox="0 0 140 40"><g fill="#ffffff" fill-rule="evenodd"><path d="M50.15 9.6H59.4Q65.6 9.6 65.6 15.8V24.6H60.9V16.4Q60.9 14.2 58.7 14.2H54.85V24.6H50.15Z"/><path d="M65.2 9.6H70.5L73.95 19.6L77.1 9.6H81.7L76.6 24.6H70.7Z"/><rect x="82.4" y="9.6" width="4.7" height="15"/><path d="M89.2 9.6H97.4Q104.6 9.6 104.6 17.1Q104.6 24.6 97.4 24.6H89.2ZM93.9 14.2V20H97.2Q100 20 100 17.1Q100 14.2 97.2 14.2Z"/><rect x="106.4" y="9.6" width="4.7" height="15"/><path d="M111.8 24.6L117.5 9.6H122.6L128.3 24.6H123.3L122.5 22H117.6L116.8 24.6ZM118.1 19.8H122L120.05 14.2Z"/></g><circle cx="131" cy="23.5" r="1.3" fill="#bbbbbb"/></svg>
<div class="t" style="left:11px;top:29.21px;font-size:7.2px;line-height:7.2px;color:#76b900;font-weight:normal;-webkit-text-stroke:0.2px #76b900;letter-spacing:0.1px">Powered by Nemotron v3 Nano</div>
<div class="box" style="left:582px;top:10px;width:118px;height:24px;background:#1f1f1f;border:1px solid #2c2c2c;border-radius:6px"></div>
<svg class="ic" style="left:589.5px;top:15.5px;width:13px;height:13px" viewBox="0 0 24 24" fill="none" stroke="#a3a3a3" stroke-width="1.9" stroke-linecap="round" stroke-linejoin="round"><circle cx="11" cy="11" r="8"/><path d="m21 21-4.3-4.3"/></svg>
<div class="t" style="left:607.5px;top:17.52px;font-size:10.1px;line-height:10.1px;color:#a3a3a3;font-weight:normal">Search...</div>
<div class="box" style="left:657px;top:15px;width:34px;height:14px;background:#2a2a2a;border-radius:3px"></div>
<div class="t" style="left:661.5px;top:18.68px;font-size:9.2px;line-height:9.2px;color:#cfcfcf;font-weight:normal;font-family:'Liberation Mono',monospace;letter-spacing:-0.5px">CtrlK</div>
<svg class="ic" style="left:724.6px;top:16.2px;width:11.6px;height:11.6px" viewBox="0 0 24 24" fill="none" stroke="#76b900" stroke-width="2.2" stroke-linecap="round" stroke-linejoin="round"><path d="M12 7v14"/><path d="M3 18a1 1 0 0 1-1-1V4a1 1 0 0 1 1-1h5a4 4 0 0 1 4 4 4 4 0 0 1 4-4h5a1 1 0 0 1 1 1v13a1 1 0 0 1-1 1h-6a3 3 0 0 0-3 3 3 3 0 0 0-3-3z"/></svg>
<div class="t" style="left:740.7px;top:17.55px;font-size:10.45px;line-height:10.45px;color:#76b900;font-weight:normal;-webkit-text-stroke:0.25px #76b900">AI Audit Documentation</div>
<svg class="ic" style="left:875.5px;top:16px;width:11.5px;height:11.5px" viewBox="0 0 24 24" fill="none" stroke="#22c55e" stroke-width="2" stroke-linecap="round" stroke-linejoin="round"><path d="M21.801 10A10 10 0 1 1 17 3.335"/><path d="m9 11 3 3L22 4"/></svg>
<div class="box" style="left:893px;top:19.5px;width:5px;height:5px;border-radius:50%;background:#22c55e"></div>
<div class="t" style="left:904px;top:17.10px;font-size:9.75px;line-height:9.75px;color:#c8c8c8;font-weight:normal">LIVE MONITORING</div>
<svg class="ic" style="left:1007.5px;top:16px;width:11px;height:11px" viewBox="0 0 24 24" fill="none" stroke="#22c55e" stroke-width="2" stroke-linecap="round" stroke-linejoin="round"><path d="M12 20h.01"/><path d="M2 8.82a15 15 0 0 1 20 0"/><path d="M5 12.859a10 10 0 0 1 14 0"/><path d="M8.5 16.429a5 5 0 0 1 7 0"/></svg>
<div class="box" style="left:1024.5px;top:19.5px;width:5px;height:5px;border-radius:50%;background:#22c55e"></div>
<div class="box" style="left:1047px;top:12.5px;width:127px;height:19px;background:#262626;border-radius:6px"></div>
<div class="t" style="left:1055.5px;top:17.83px;font-size:8.3px;line-height:8.3px;color:#a8a8a8;font-weight:normal">GPU:</div>
<div class="t" style="left:1081px;top:18.18px;font-size:9px;line-height:9px;color:#76b900;font-weight:bold">25% | 40°C | 0.0 FPS</div>
<div class="box" style="left:0;top:45px;width:179px;height:1400px;background:#1a1a1a;border-right:1px solid #272727"></div>
<div class="t" style="left:19.5px;top:62.95px;font-size:9.06px;line-height:9.06px;color:#b8b8b8;font-weight:bold;letter-spacing:0px">MONITORING</div>
<svg class="ic" style="left:147.3px;top:61.199999999999996px;width:11.5px;height:11.5px" viewBox="0 0 24 24" fill="none" stroke="#b0b0b0" stroke-width="2.2" stroke-linecap="round" stroke-linejoin="round"><path d="m6 9 6 6 6-6"/></svg>
<svg class="ic" style="left:27.5px;top:88.39999999999999px;width:14.5px;height:14.5px" viewBox="0 0 24 24" fill="none" stroke="#cfcfcf" stroke-width="1.9" stroke-linecap="round" stroke-linejoin="round"><path d="M15 21v-8a1 1 0 0 0-1-1h-4a1 1 0 0 0-1 1v8"/><path d="M3 10a2 2 0 0 1 .709-1.528l7-5.999a2 2 0 0 1 2.582 0l7 5.999A2 2 0 0 1 21 10v9a2 2 0 0 1-2 2H5a2 2 0 0 1-2-2z"/></svg>
<div class="t" style="left:50.5px;top:90.42px;font-size:11.7px;line-height:11.7px;color:#d4d4d4;font-weight:normal">Dashboard</div>
<svg class="ic" style="left:27.5px;top:121.9px;width:14.5px;height:14.5px" viewBox="0 0 24 24" fill="none" stroke="#cfcfcf" stroke-width="1.9" stroke-linecap="round" stroke-linejoin="round"><circle cx="12" cy="12" r="10"/><polyline points="12 6 12 12 16 14"/></svg>
<div class="t" style="left:50.5px;top:123.92px;font-size:11.7px;line-height:11.7px;color:#d4d4d4;font-weight:normal">Timeline</div>
<svg class="ic" style="left:27.5px;top:155.4px;width:14.5px;height:14.5px" viewBox="0 0 24 24" fill="none" stroke="#cfcfcf" stroke-width="1.9" stroke-linecap="round" stroke-linejoin="round"><path d="M16 21v-2a4 4 0 0 0-4-4H6a4 4 0 0 0-4 4v2"/><circle cx="9" cy="7" r="4"/><path d="M22 21v-2a4 4 0 0 0-3-3.87"/><path d="M16 3.13a4 4 0 0 1 0 7.75"/></svg>
<div class="t" style="left:50.5px;top:157.42px;font-size:11.7px;line-height:11.7px;color:#d4d4d4;font-weight:normal">Entities</div>
<svg class="ic" style="left:27.5px;top:188.9px;width:14.5px;height:14.5px" viewBox="0 0 24 24" fill="none" stroke="#cfcfcf" stroke-width="1.9" stroke-linecap="round" stroke-linejoin="round"><path d="M6 8a6 6 0 0 1 12 0c0 7 3 9 3 9H3s3-2 3-9"/><path d="M10.3 21a1.94 1.94 0 0 0 3.4 0"/></svg>
<div class="t" style="left:50.5px;top:190.92px;font-size:11.7px;line-height:11.7px;color:#d4d4d4;font-weight:normal">Alerts</div>
<div class="t" style="left:19.5px;top:225.05px;font-size:9.06px;line-height:9.06px;color:#b8b8b8;font-weight:bold;letter-spacing:0px">ANALYTICS</div>
<svg class="ic" style="left:147.3px;top:223.3px;width:11.5px;height:11.5px" viewBox="0 0 24 24" fill="none" stroke="#b0b0b0" stroke-width="2.2" stroke-linecap="round" stroke-linejoin="round"><path d="m6 9 6 6 6-6"/></svg>
<svg class="ic" style="left:27.5px;top:250.99999999999997px;width:14.5px;height:14.5px" viewBox="0 0 24 24" fill="none" stroke="#cfcfcf" stroke-width="1.9" stroke-linecap="round" stroke-linejoin="round"><path d="M3 3v16a2 2 0 0 0 2 2h16"/><path d="M18 17V9"/><path d="M13 17V5"/><path d="M8 17v-3"/></svg>
<div class="t" style="left:50.5px;top:253.02px;font-size:11.7px;line-height:11.7px;color:#d4d4d4;font-weight:normal">Analytics</div>
<div class="box" style="left:17px;top:276.6px;width:150px;height:30.6px;background:#76b900;border-radius:6px"></div>
<svg class="ic" style="left:27.5px;top:284.40000000000003px;width:14.5px;height:14.5px" viewBox="0 0 24 24" fill="none" stroke="#111" stroke-width="1.9" stroke-linecap="round" stroke-linejoin="round"><rect width="8" height="4" x="8" y="2" rx="1" ry="1"/><path d="M16 4h2a2 2 0 0 1 2 2v14a2 2 0 0 1-2 2H6a2 2 0 0 1-2-2V6a2 2 0 0 1 2-2h2"/><path d="m9 14 2 2 4-4"/></svg>
<div class="t" style="left:50.5px;top:286.42px;font-size:11.7px;line-height:11.7px;color:#111;font-weight:bold">AI Audit</div>
<svg class="ic" style="left:27.5px;top:317.90000000000003px;width:14.5px;height:14.5px" viewBox="0 0 24 24" fill="none" stroke="#cfcfcf" stroke-width="1.9" stroke-linecap="round" stroke-linejoin="round"><path d="M12 5a3 3 0 1 0-5.997.125 4 4 0 0 0-2.526 5.77 4 4 0 0 0 .556 6.588A4 4 0 1 0 12 18Z"/><path d="M12 5a3 3 0 1 1 5.997.125 4 4 0 0 1 2.526 5.77 4 4 0 0 1-.556 6.588A4 4 0 1 1 12 18Z"/><path d="M15 13a4.5 4.5 0 0 1-3-4 4.5 4.5 0 0 1-3 4"/><path d="M17.599 6.5a3 3 0 0 0 .399-1.375"/><path d="M6.003 5.125A3 3 0 0 0 6.401 6.5"/><path d="M3.477 10.896a4 4 0 0 1 .585-.396"/><path d="M19.938 10.5a4 4 0 0 1 .585.396"/><path d="M6 18a4 4 0 0 1-1.967-.516"/><path d="M19.967 17.484A4 4 0 0 1 18 18"/></svg>
<div class="t" style="left:50.5px;top:319.92px;font-size:11.7px;line-height:11.7px;color:#d4d4d4;font-weight:normal">AI Performance</div>
<svg class="ic" style="left:27.5px;top:351.3px;width:14.5px;height:14.5px" viewBox="0 0 24 24" fill="none" stroke="#cfcfcf" stroke-width="1.9" stroke-linecap="round" stroke-linejoin="round"><path d="M8.5 14.5A2.5 2.5 0 0 0 11 12c0-1.38-.5-2-1-3-1.072-2.143-.224-4.054 2-6 .5 2.5 2 4.9 4 6.5 2 1.6 3 3.5 3 5.5a7 7 0 1 1-14 0c0-1.153.433-2.294 1-3a2.5 2.5 0 0 0 2.5 2.5z"/></svg>
<div class="t" style="left:50.5px;top:353.32px;font-size:11.7px;line-height:11.7px;color:#d4d4d4;font-weight:normal">Profiling</div>
<div class="t" style="left:19.5px;top:387.15px;font-size:9.06px;line-height:9.06px;color:#b8b8b8;font-weight:bold;letter-spacing:0px">OPERATIONS</div>
<svg class="ic" style="left:147.3px;top:385.4px;width:11.5px;height:11.5px" viewBox="0 0 24 24" fill="none" stroke="#b0b0b0" stroke-width="2.2" stroke-linecap="round" stroke-linejoin="round"><path d="m6 9 6 6 6-6"/></svg>
<svg class="ic" style="left:27.5px;top:413.20000000000005px;width:14.5px;height:14.5px" viewBox="0 0 24 24" fill="none" stroke="#cfcfcf" stroke-width="1.9" stroke-linecap="round" stroke-linejoin="round"><path d="M16 20V4a2 2 0 0 0-2-2h-4a2 2 0 0 0-2 2v16"/><rect width="20" height="14" x="2" y="6" rx="2"/></svg>
<div class="t" style="left:50.5px;top:415.22px;font-size:11.7px;line-height:11.7px;color:#d4d4d4;font-weight:normal">Jobs</div>
<svg class="ic" style="left:27.5px;top:446.8px;width:14.5px;height:14.5px" viewBox="0 0 24 24" fill="none" stroke="#cfcfcf" stroke-width="1.9" stroke-linecap="round" stroke-linejoin="round"><rect width="8" height="8" x="3" y="3" rx="4"/><path d="M7 11v4a2 2 0 0 0 2 2h4"/><rect width="8" height="8" x="13" y="13" rx="4"/></svg>
<div class="t" style="left:50.5px;top:448.82px;font-size:11.7px;line-height:11.7px;color:#d4d4d4;font-weight:normal">Pipeline</div>
<svg class="ic" style="left:27.5px;top:480.40000000000003px;width:14.5px;height:14.5px" viewBox="0 0 24 24" fill="none" stroke="#cfcfcf" stroke-width="1.9" stroke-linecap="round" stroke-linejoin="round"><path d="M22 12h-2.48a2 2 0 0 0-1.93 1.46l-2.35 8.36a.25.25 0 0 1-.48 0L9.24 2.18a.25.25 0 0 0-.48 0l-2.35 8.36A2 2 0 0 1 4.49 12H2"/></svg>
<div class="t" style="left:50.5px;top:482.42px;font-size:11.7px;line-height:11.7px;color:#d4d4d4;font-weight:normal">Tracing</div>
<svg class="ic" style="left:27.5px;top:513.8000000000001px;width:14.5px;height:14.5px" viewBox="0 0 24 24" fill="none" stroke="#cfcfcf" stroke-width="1.9" stroke-linecap="round" stroke-linejoin="round"><path d="M15 12h-5"/><path d="M15 8h-5"/><path d="M19 17V5a2 2 0 0 0-2-2H4"/><path d="M8 21h12a2 2 0 0 0 2-2v-1a1 1 0 0 0-1-1H11a1 1 0 0 0-1 1v1a2 2 0 1 1-4 0V5a2 2 0 1 0-4 0v2a1 1 0 0 0 1 1h3"/></svg>
<div class="t" style="left:50.5px;top:515.82px;font-size:11.7px;line-height:11.7px;color:#d4d4d4;font-weight:normal">Logs</div>
<div class="t" style="left:19.5px;top:549.25px;font-size:9.06px;line-height:9.06px;color:#b8b8b8;font-weight:bold;letter-spacing:0px">ADMIN</div>
<svg class="ic" style="left:147.3px;top:547.5px;width:11.5px;height:11.5px" viewBox="0 0 24 24" fill="none" stroke="#b0b0b0" stroke-width="2.2" stroke-linecap="round" stroke-linejoin="round"><path d="m6 9 6 6 6-6"/></svg>
<svg class="ic" style="left:27.5px;top:575.2px;width:14.5px;height:14.5px" viewBox="0 0 24 24" fill="none" stroke="#cfcfcf" stroke-width="1.9" stroke-linecap="round" stroke-linejoin="round"><path d="M20 13c0 5-3.5 7.5-7.66 8.95a1 1 0 0 1-.67-.01C7.5 20.5 4 18 4 13V6a1 1 0 0 1 1-1c2 0 4.5-1.2 6.24-2.72a1.17 1.17 0 0 1 1.52 0C14.510 3.81 17 5 19 5a1 1 0 0 1 1 1z"/></svg>
<div class="t" style="left:50.5px;top:577.22px;font-size:11.7px;line-height:11.7px;color:#d4d4d4;font-weight:normal">Audit Log</div>
<svg class="ic" style="left:27.5px;top:608.9px;width:14.5px;height:14.5px" viewBox="0 0 24 24" fill="none" stroke="#cfcfcf" stroke-width="1.9" stroke-linecap="round" stroke-linejoin="round"><path d="M3 6h18"/><path d="M19 6v14c0 1-1 2-2 2H7c-1 0-2-1-2-2V6"/><path d="M8 6V4c0-1 1-2 2-2h4c1 0 2 1 2 2v2"/><line x1="10" x2="10" y1="11" y2="17"/><line x1="14" x2="14" y1="11" y2="17"/></svg>
<div class="t" style="left:50.5px;top:610.92px;font-size:11.7px;line-height:11.7px;color:#d4d4d4;font-weight:normal">Trash</div>
<svg class="ic" style="left:27.5px;top:642.2px;width:14.5px;height:14.5px" viewBox="0 0 24 24" fill="none" stroke="#cfcfcf" stroke-width="1.9" stroke-linecap="round" stroke-linejoin="round"><path d="M12.22 2h-.44a2 2 0 0 0-2 2v.18a2 2 0 0 1-1 1.730l-.43.25a2 2 0 0 1-2 0l-.15-.08a2 2 0 0 0-2.73.73l-.22.38a2 2 0 0 0 .73 2.73l.15.1a2 2 0 0 1 1 1.72v.51a2 2 0 0 1-1 1.74l-.15.09a2 2 0 0 0-.73 2.73l.22.38a2 2 0 0 0 2.73.73l.15-.08a2 2 0 0 1 2 0l.43.25a2 2 0 0 1 1 1.73V20a2 2 0 0 0 2 2h.44a2 2 0 0 0 2-2v-.18a2 2 0 0 1 1-1.73l.43-.25a2 2 0 0 1 2 0l.15.08a2 2 0 0 0 2.73-.73l.22-.39a2 2 0 0 0-.73-2.73l-.15-.08a2 2 0 0 1-1-1.74v-.5a2 2 0 0 1 1-1.74l.15-.09a2 2 0 0 0 .73-2.73l-.22-.38a2 2 0 0 0-2.73-.73l-.15.08a2 2 0 0 1-2 0l-.43-.25a2 2 0 0 1-1-1.73V4a2 2 0 0 0-2-2z"/><circle cx="12" cy="12" r="3"/></svg>
<div class="t" style="left:50.5px;top:644.22px;font-size:11.7px;line-height:11.7px;color:#d4d4d4;font-weight:normal">Settings</div>
<svg class="ic" style="left:202px;top:70.5px;width:21px;height:21px" viewBox="0 0 24 24" fill="none" stroke="#76b900" stroke-width="2" stroke-linecap="round" stroke-linejoin="round"><rect width="8" height="4" x="8" y="2" rx="1" ry="1"/><path d="M16 4h2a2 2 0 0 1 2 2v14a2 2 0 0 1-2 2H6a2 2 0 0 1-2-2V6a2 2 0 0 1 2-2h2"/><path d="m9 14 2 2 4-4"/></svg>
<div class="t" style="left:232.4px;top:68.70px;font-size:25.4px;line-height:25.4px;color:#ffffff;font-weight:bold">AI Audit Dashboard</div>
<div class="t" style="left:201px;top:101.72px;font-size:10.5px;line-height:10.5px;color:#a3a3a3;font-weight:normal">Model contribution rates, quality metrics, and prompt improvement recommendations</div>
<svg class="ic" style="left:956.5px;top:76.5px;width:11px;height:11px" viewBox="0 0 24 24" fill="none" stroke="#a3a3a3" stroke-width="2" stroke-linecap="round" stroke-linejoin="round"><path d="M8 2v4"/><path d="M16 2v4"/><rect width="18" height="18" x="3" y="4" rx="2"/><path d="M3 10h18"/></svg>
<div class="box" style="left:973px;top:67px;width:113px;height:30px;border:1px solid #8a8a8a;border-radius:2px;background:#121212"></div>
<div class="t" style="left:983px;top:76.17px;font-size:11.6px;line-height:11.6px;color:#f0f0f0;font-weight:normal">Last 7 days</div>
<svg class="ic" style="left:1063.5px;top:76px;width:12px;height:12px" viewBox="0 0 24 24" fill="none" stroke="#e8e8e8" stroke-width="2.3" stroke-linecap="round" stroke-linejoin="round"><path d="m6 9 6 6 6-6"/></svg>
<div class="box" style="left:1094px;top:69px;width:75px;height:25px;background:#292929;border-radius:5px"></div>
<svg class="ic" style="left:1105px;top:76.5px;width:11px;height:11px" viewBox="0 0 24 24" fill="none" stroke="#e8e8e8" stroke-width="2.4" stroke-linecap="round" stroke-linejoin="round"><path d="M3 12a9 9 0 0 1 9-9 9.75 9.75 0 0 1 6.74 2.74L21 8"/><path d="M21 3v5h-5"/><path d="M21 12a9 9 0 0 1-9 9 9.75 9.75 0 0 1-6.74-2.74L3 16"/><path d="M8 16H3v5"/></svg>
<div class="t" style="left:1122px;top:77.39px;font-size:10.17px;line-height:10.17px;color:#f0f0f0;font-weight:normal;-webkit-text-stroke:0.25px #f0f0f0">Refresh</div>
<div class="box" style="left:201px;top:137px;width:969px;height:35px;background:#1a1a1a;border:1px solid #242424;border-radius:7px"></div>
<div class="box" style="left:205px;top:140px;width:238px;height:28.5px;background:#76b900;border-radius:5px"></div>
<svg class="ic" style="left:289.5px;top:148px;width:12px;height:12px" viewBox="0 0 24 24" fill="none" stroke="#1a1a1a" stroke-width="2.1" stroke-linecap="round" stroke-linejoin="round"><rect width="7" height="9" x="3" y="3" rx="1"/><rect width="7" height="5" x="14" y="3" rx="1"/><rect width="7" height="9" x="14" y="12" rx="1"/><rect width="7" height="5" x="3" y="16" rx="1"/></svg>
<div class="t" style="left:306.7px;top:149.58px;font-size:10.38px;line-height:10.38px;color:#111111;font-weight:normal;-webkit-text-stroke:0.25px #111">Dashboard</div>
<svg class="ic" style="left:511.5px;top:148.5px;width:11px;height:11px" viewBox="0 0 24 24" fill="none" stroke="#c8c8c8" stroke-width="2" stroke-linecap="round" stroke-linejoin="round"><path d="M9.937 15.5A2 2 0 0 0 8.5 14.063l-6.135-1.582a.5.5 0 0 1 0-.962L8.5 9.936A2 2 0 0 0 9.937 8.5l1.582-6.135a.5.5 0 0 1 .963 0L14.063 8.5A2 2 0 0 0 15.5 9.937l6.135 1.581a.5.5 0 0 1 0 .964L15.5 14.063a2 2 0 0 0-1.437 1.437l-1.582 6.135a.5.5 0 0 1-.963 0z"/><path d="M20 3v4"/><path d="M22 5h-4"/><path d="M4 17v2"/><path d="M5 18H3"/></svg>
<div class="t" style="left:529px;top:149.52px;font-size:10.5px;line-height:10.5px;color:#dcdcdc;font-weight:normal;-webkit-text-stroke:0.25px #dcdcdc">Prompt Playground</div>
<svg class="ic" style="left:770px;top:148.5px;width:11.5px;height:11.5px" viewBox="0 0 24 24" fill="none" stroke="#c8c8c8" stroke-width="2.1" stroke-linecap="round" stroke-linejoin="round"><polygon points="6 3 20 12 6 21 6 3"/></svg>
<div class="t" style="left:787px;top:149.52px;font-size:10.5px;line-height:10.5px;color:#dcdcdc;font-weight:normal;-webkit-text-stroke:0.25px #dcdcdc">Batch Audit</div>
<svg class="ic" style="left:1002px;top:148.3px;width:11.5px;height:11.5px" viewBox="0 0 24 24" fill="none" stroke="#c8c8c8" stroke-width="2.2" stroke-linecap="round" stroke-linejoin="round"><path d="M3 12a9 9 0 1 0 9-9 9.75 9.75 0 0 0-6.74 2.74L3 8"/><path d="M3 3v5h5"/><path d="M12 7v5l4 2"/></svg>
<div class="t" style="left:1019px;top:149.52px;font-size:10.5px;line-height:10.5px;color:#dcdcdc;font-weight:normal;-webkit-text-stroke:0.25px #dcdcdc">Version History</div>
<div class="box" style="left:200px;top:188px;width:235.5px;height:105px;background:#1a1a1a;border:1px solid #2a4466"></div>
<svg class="ic" style="left:217.2px;top:206px;width:15px;height:15px" viewBox="0 0 24 24" fill="none" stroke="#76b900" stroke-width="2" stroke-linecap="round" stroke-linejoin="round"><polyline points="22 7 13.5 15.5 8.5 10.5 2 17"/><polyline points="16 7 22 7 22 13"/></svg>
<div class="t" style="left:237.2px;top:207.92px;font-size:11.7px;line-height:11.7px;color:#c4c4c4;font-weight:normal">Average Quality</div>
<div class="t" style="left:217.5px;top:229.97px;font-size:12px;line-height:12px;color:#ffffff;font-weight:bold">4.7 / 5</div>
<div class="box" style="left:217.5px;top:252.6px;width:200px;height:5.7px;background:#1f3b31"><div style="width:94%;height:5.7px;background:#10b981"></div></div>
<div class="t" style="left:217.5px;top:265.13px;font-size:8.9px;line-height:8.9px;color:#9a9a9a;font-weight:normal">Based on 64 evaluated events</div>
<div class="box" style="left:445px;top:188px;width:235.5px;height:105px;background:#1a1a1a;border:1px solid #2a4466"></div>
<svg class="ic" style="left:462.2px;top:206px;width:15px;height:15px" viewBox="0 0 24 24" fill="none" stroke="#76b900" stroke-width="2" stroke-linecap="round" stroke-linejoin="round"><path d="M21.801 10A10 10 0 1 1 17 3.335"/><path d="m9 11 3 3L22 4"/></svg>
<div class="t" style="left:482.2px;top:207.92px;font-size:11.7px;line-height:11.7px;color:#c4c4c4;font-weight:normal">Consistency Rate</div>
<div class="t" style="left:462.5px;top:229.97px;font-size:12px;line-height:12px;color:#ffffff;font-weight:bold">3.0 / 5</div>
<div class="box" style="left:462.5px;top:252.6px;width:200px;height:5.7px;background:#4a2222"><div style="width:59%;height:5.7px;background:#ef4444"></div></div>
<div class="t" style="left:462.5px;top:265.13px;font-size:8.9px;line-height:8.9px;color:#9a9a9a;font-weight:normal">Risk score consistency on re-evaluation</div>
<div class="box" style="left:690px;top:188px;width:235.5px;height:105px;background:#1a1a1a;border:1px solid #2a4466"></div>
<svg class="ic" style="left:707.2px;top:206px;width:15px;height:15px" viewBox="0 0 24 24" fill="none" stroke="#76b900" stroke-width="2" stroke-linecap="round" stroke-linejoin="round"><path d="m12 14 4-4"/><path d="M3.34 19a10 10 0 1 1 17.32 0"/></svg>
<div class="t" style="left:727.2px;top:207.92px;font-size:11.7px;line-height:11.7px;color:#c4c4c4;font-weight:normal">Enrichment Utilization</div>
<div class="t" style="left:707.5px;top:229.97px;font-size:12px;line-height:12px;color:#ffffff;font-weight:bold">64%</div>
<div class="box" style="left:707.5px;top:252.6px;width:200px;height:5.7px;background:#4a3d17"><div style="width:64%;height:5.7px;background:#eab308"></div></div>
<div class="t" style="left:707.5px;top:265.13px;font-size:8.9px;line-height:8.9px;color:#9a9a9a;font-weight:normal">Percentage of AI models contributing</div>
<div class="box" style="left:935px;top:188px;width:235.5px;height:105px;background:#1a1a1a;border:1px solid #2a4466"></div>
<div class="t" style="left:952.5px;top:207.92px;font-size:11.7px;line-height:11.7px;color:#c4c4c4;font-weight:normal">Evaluation Coverage</div>
<div class="t" style="left:952.5px;top:229.97px;font-size:12px;line-height:12px;color:#ffffff;font-weight:bold">97%</div>
<div class="box" style="left:952.5px;top:252.6px;width:200px;height:5.7px;background:#1f3b31"><div style="width:97%;height:5.7px;background:#10b981"></div></div>
<div class="t" style="left:952.5px;top:265.13px;font-size:8.9px;line-height:8.9px;color:#9a9a9a;font-weight:normal">64 of 66 events evaluated</div>
<div class="box" style="left:201px;top:309px;width:969px;height:546px;background:#1f1f1f;border:1px solid #252525;border-radius:8px"></div>
<div class="t" style="left:219px;top:330.13px;font-size:12.67px;line-height:12.67px;color:#ffffff;font-weight:bold">Model Contribution Breakdown</div>
<div class="t" style="left:219px;top:351.26px;font-size:10.42px;line-height:10.42px;color:#a3a3a3;font-weight:normal">Percentage of events each AI model contributed to</div>
<svg class="ic" style="left:218.7px;top:382.2px;width:10.6px;height:10.6px" viewBox="0 0 24 24" fill="none" stroke="#a0a0a0" stroke-width="2.4" stroke-linecap="round" stroke-linejoin="round"><path d="M3 7V5a2 2 0 0 1 2-2h2"/><path d="M17 3h2a2 2 0 0 1 2 2v2"/><path d="M21 17v2a2 2 0 0 1-2 2h-2"/><path d="M7 21H5a2 2 0 0 1-2-2v-2"/></svg>
<div class="t" style="left:235.5px;top:382.90px;font-size:11.15px;line-height:11.15px;color:#ececec;font-weight:bold">RT-DETRv2</div>
<div class="t" style="right:39.700000000000045px;top:383.15px;font-size:10.45px;line-height:10.45px;display:flex;gap:11px"><span style="color:#b4b4b4">66 events</span><span style="color:#76b900;font-weight:bold;font-size:10.1px">100%</span></div>
<div class="box" style="left:218.5px;top:401.80px;width:933.5px;height:5.7px;background:#2a2a2a;border-radius:3px;overflow:hidden"><div style="width:100%;height:5.7px;background:linear-gradient(to right,#76b900,#8acf00)"></div></div>
<svg class="ic" style="left:218.7px;top:421.37px;width:10.6px;height:10.6px" viewBox="0 0 24 24" fill="none" stroke="#a0a0a0" stroke-width="2.4" stroke-linecap="round" stroke-linejoin="round"><path d="M3 7V5a2 2 0 0 1 2-2h2"/><path d="M17 3h2a2 2 0 0 1 2 2v2"/><path d="M21 17v2a2 2 0 0 1-2 2h-2"/><path d="M7 21H5a2 2 0 0 1-2-2v-2"/></svg>
<div class="t" style="left:235.5px;top:422.07px;font-size:11.15px;line-height:11.15px;color:#ececec;font-weight:bold">Baseline Comparison</div>
<div class="t" style="right:39.700000000000045px;top:422.32px;font-size:10.45px;line-height:10.45px;display:flex;gap:11px"><span style="color:#b4b4b4">66 events</span><span style="color:#76b900;font-weight:bold;font-size:10.1px">100%</span></div>
<div class="box" style="left:218.5px;top:440.97px;width:933.5px;height:5.7px;background:#2a2a2a;border-radius:3px;overflow:hidden"><div style="width:100%;height:5.7px;background:linear-gradient(to right,#76b900,#8acf00)"></div></div>
<svg class="ic" style="left:218.7px;top:460.53999999999996px;width:10.6px;height:10.6px" viewBox="0 0 24 24" fill="none" stroke="#a0a0a0" stroke-width="2.4" stroke-linecap="round" stroke-linejoin="round"><path d="M3 7V5a2 2 0 0 1 2-2h2"/><path d="M17 3h2a2 2 0 0 1 2 2v2"/><path d="M21 17v2a2 2 0 0 1-2 2h-2"/><path d="M7 21H5a2 2 0 0 1-2-2v-2"/></svg>
<div class="t" style="left:235.5px;top:461.24px;font-size:11.15px;line-height:11.15px;color:#ececec;font-weight:bold">Cross-Camera</div>
<div class="t" style="right:39.700000000000045px;top:461.49px;font-size:10.45px;line-height:10.45px;display:flex;gap:11px"><span style="color:#b4b4b4">66 events</span><span style="color:#76b900;font-weight:bold;font-size:10.1px">100%</span></div>
<div class="box" style="left:218.5px;top:480.14px;width:933.5px;height:5.7px;background:#2a2a2a;border-radius:3px;overflow:hidden"><div style="width:100%;height:5.7px;background:linear-gradient(to right,#76b900,#8acf00)"></div></div>
<svg class="ic" style="left:218.7px;top:499.71px;width:10.6px;height:10.6px" viewBox="0 0 24 24" fill="none" stroke="#a0a0a0" stroke-width="2.4" stroke-linecap="round" stroke-linejoin="round"><path d="M2.062 12.348a1 1 0 0 1 0-.696 10.750 10.75 0 0 1 19.876 0 1 1 0 0 1 0 .696 10.75 10.75 0 0 1-19.876 0"/><circle cx="12" cy="12" r="3"/></svg>
<div class="t" style="left:235.5px;top:500.41px;font-size:11.15px;line-height:11.15px;color:#ececec;font-weight:bold">Florence-2</div>
<div class="t" style="right:39.700000000000045px;top:500.66px;font-size:10.45px;line-height:10.45px;display:flex;gap:11px"><span style="color:#b4b4b4">62 events</span><span style="color:#76b900;font-weight:bold;font-size:10.1px">94%</span></div>
<div class="box" style="left:218.5px;top:519.31px;width:933.5px;height:5.7px;background:#2a2a2a;border-radius:3px;overflow:hidden"><div style="width:94%;height:5.7px;background:linear-gradient(to right,#76b900,#8acf00)"></div></div>
<svg class="ic" style="left:218.7px;top:538.88px;width:10.6px;height:10.6px" viewBox="0 0 24 24" fill="none" stroke="#a0a0a0" stroke-width="2.4" stroke-linecap="round" stroke-linejoin="round"><path d="M3 7V5a2 2 0 0 1 2-2h2"/><path d="M17 3h2a2 2 0 0 1 2 2v2"/><path d="M21 17v2a2 2 0 0 1-2 2h-2"/><path d="M7 21H5a2 2 0 0 1-2-2v-2"/></svg>
<div class="t" style="left:235.5px;top:539.58px;font-size:11.15px;line-height:11.15px;color:#ececec;font-weight:bold">Weather Analysis</div>
<div class="t" style="right:39.700000000000045px;top:539.83px;font-size:10.45px;line-height:10.45px;display:flex;gap:11px"><span style="color:#b4b4b4">62 events</span><span style="color:#76b900;font-weight:bold;font-size:10.1px">94%</span></div>
<div class="box" style="left:218.5px;top:558.48px;width:933.5px;height:5.7px;background:#2a2a2a;border-radius:3px;overflow:hidden"><div style="width:94%;height:5.7px;background:linear-gradient(to right,#76b900,#8acf00)"></div></div>
<svg class="ic" style="left:218.7px;top:578.0500000000001px;width:10.6px;height:10.6px" viewBox="0 0 24 24" fill="none" stroke="#a0a0a0" stroke-width="2.4" stroke-linecap="round" stroke-linejoin="round"><path d="M3 7V5a2 2 0 0 1 2-2h2"/><path d="M17 3h2a2 2 0 0 1 2 2v2"/><path d="M21 17v2a2 2 0 0 1-2 2h-2"/><path d="M7 21H5a2 2 0 0 1-2-2v-2"/></svg>
<div class="t" style="left:235.5px;top:578.75px;font-size:11.15px;line-height:11.15px;color:#ececec;font-weight:bold">Image Quality</div>
<div class="t" style="right:39.700000000000045px;top:579.00px;font-size:10.45px;line-height:10.45px;display:flex;gap:11px"><span style="color:#b4b4b4">62 events</span><span style="color:#76b900;font-weight:bold;font-size:10.1px">94%</span></div>
<div class="box" style="left:218.5px;top:597.65px;width:933.5px;height:5.7px;background:#2a2a2a;border-radius:3px;overflow:hidden"><div style="width:94%;height:5.7px;background:linear-gradient(to right,#76b900,#8acf00)"></div></div>
<svg class="ic" style="left:218.7px;top:617.22px;width:10.6px;height:10.6px" viewBox="0 0 24 24" fill="none" stroke="#a0a0a0" stroke-width="2.4" stroke-linecap="round" stroke-linejoin="round"><path d="M3 7V5a2 2 0 0 1 2-2h2"/><path d="M17 3h2a2 2 0 0 1 2 2v2"/><path d="M21 17v2a2 2 0 0 1-2 2h-2"/><path d="M7 21H5a2 2 0 0 1-2-2v-2"/></svg>
<div class="t" style="left:235.5px;top:617.92px;font-size:11.15px;line-height:11.15px;color:#ececec;font-weight:bold">Clothing Analysis</div>
<div class="t" style="right:39.700000000000045px;top:618.17px;font-size:10.45px;line-height:10.45px;display:flex;gap:11px"><span style="color:#b4b4b4">49 events</span><span style="color:#76b900;font-weight:bold;font-size:10.1px">74%</span></div>
<div class="box" style="left:218.5px;top:636.82px;width:933.5px;height:5.7px;background:#2a2a2a;border-radius:3px;overflow:hidden"><div style="width:74%;height:5.7px;background:linear-gradient(to right,#76b900,#8acf00)"></div></div>
<svg class="ic" style="left:218.7px;top:656.39px;width:10.6px;height:10.6px" viewBox="0 0 24 24" fill="none" stroke="#a0a0a0" stroke-width="2.4" stroke-linecap="round" stroke-linejoin="round"><rect width="18" height="18" x="3" y="3" rx="2" ry="2"/><circle cx="9" cy="9" r="2"/><path d="m21 15-3.086-3.086a2 2 0 0 0-2.828 0L6 21"/></svg>
<div class="t" style="left:235.5px;top:657.09px;font-size:11.15px;line-height:11.15px;color:#ececec;font-weight:bold">X-CLIP</div>
<div class="t" style="right:39.700000000000045px;top:657.34px;font-size:10.45px;line-height:10.45px;display:flex;gap:11px"><span style="color:#b4b4b4">48 events</span><span style="color:#76b900;font-weight:bold;font-size:10.1px">73%</span></div>
<div class="box" style="left:218.5px;top:675.99px;width:933.5px;height:5.7px;background:#2a2a2a;border-radius:3px;overflow:hidden"><div style="width:73%;height:5.7px;background:linear-gradient(to right,#76b900,#8acf00)"></div></div>
<svg class="ic" style="left:218.7px;top:695.5600000000001px;width:10.6px;height:10.6px" viewBox="0 0 24 24" fill="none" stroke="#a0a0a0" stroke-width="2.4" stroke-linecap="round" stroke-linejoin="round"><path d="M3 7V5a2 2 0 0 1 2-2h2"/><path d="M17 3h2a2 2 0 0 1 2 2v2"/><path d="M21 17v2a2 2 0 0 1-2 2h-2"/><path d="M7 21H5a2 2 0 0 1-2-2v-2"/></svg>
<div class="t" style="left:235.5px;top:696.26px;font-size:11.15px;line-height:11.15px;color:#ececec;font-weight:bold">Vehicle Detection</div>
<div class="t" style="right:39.700000000000045px;top:696.51px;font-size:10.45px;line-height:10.45px;display:flex;gap:11px"><span style="color:#b4b4b4">22 events</span><span style="color:#76b900;font-weight:bold;font-size:10.1px">33%</span></div>
<div class="box" style="left:218.5px;top:715.16px;width:933.5px;height:5.7px;background:#2a2a2a;border-radius:3px;overflow:hidden"><div style="width:33%;height:5.7px;background:linear-gradient(to right,#76b900,#8acf00)"></div></div>
<svg class="ic" style="left:218.7px;top:734.73px;width:10.6px;height:10.6px" viewBox="0 0 24 24" fill="none" stroke="#a0a0a0" stroke-width="2.4" stroke-linecap="round" stroke-linejoin="round"><path d="M3 7V5a2 2 0 0 1 2-2h2"/><path d="M17 3h2a2 2 0 0 1 2 2v2"/><path d="M21 17v2a2 2 0 0 1-2 2h-2"/><path d="M7 21H5a2 2 0 0 1-2-2v-2"/></svg>
<div class="t" style="left:235.5px;top:735.43px;font-size:11.15px;line-height:11.15px;color:#ececec;font-weight:bold">Violence Detection</div>
<div class="t" style="right:39.700000000000045px;top:735.68px;font-size:10.45px;line-height:10.45px;display:flex;gap:11px"><span style="color:#b4b4b4">1 events</span><span style="color:#76b900;font-weight:bold;font-size:10.1px">2%</span></div>
<div class="box" style="left:218.5px;top:754.33px;width:933.5px;height:5.7px;background:#2a2a2a;border-radius:3px;overflow:hidden"><div style="width:2%;height:5.7px;background:linear-gradient(to right,#76b900,#8acf00)"></div></div>
<svg class="ic" style="left:218.7px;top:773.9px;width:10.6px;height:10.6px" viewBox="0 0 24 24" fill="none" stroke="#a0a0a0" stroke-width="2.4" stroke-linecap="round" stroke-linejoin="round"><path d="M3 7V5a2 2 0 0 1 2-2h2"/><path d="M17 3h2a2 2 0 0 1 2 2v2"/><path d="M21 17v2a2 2 0 0 1-2 2h-2"/><path d="M7 21H5a2 2 0 0 1-2-2v-2"/></svg>
<div class="t" style="left:235.5px;top:774.60px;font-size:11.15px;line-height:11.15px;color:#ececec;font-weight:bold">Pet Detection</div>
<div class="t" style="right:39.700000000000045px;top:774.85px;font-size:10.45px;line-height:10.45px;display:flex;gap:11px"><span style="color:#b4b4b4">0 events</span><span style="color:#76b900;font-weight:bold;font-size:10.1px">0%</span></div>
<div class="box" style="left:218.5px;top:793.50px;width:933.5px;height:5.7px;background:#2a2a2a;border-radius:3px;overflow:hidden"><div style="width:0%;height:5.7px;background:linear-gradient(to right,#76b900,#8acf00)"></div></div>
<svg class="ic" style="left:218.7px;top:813.07px;width:10.6px;height:10.6px" viewBox="0 0 24 24" fill="none" stroke="#a0a0a0" stroke-width="2.4" stroke-linecap="round" stroke-linejoin="round"><path d="M3 7V5a2 2 0 0 1 2-2h2"/><path d="M17 3h2a2 2 0 0 1 2 2v2"/><path d="M21 17v2a2 2 0 0 1-2 2h-2"/><path d="M7 21H5a2 2 0 0 1-2-2v-2"/></svg>
<div class="t" style="left:235.5px;top:813.77px;font-size:11.15px;line-height:11.15px;color:#ececec;font-weight:bold">Zone Analysis</div>
<div class="t" style="right:39.700000000000045px;top:814.02px;font-size:10.45px;line-height:10.45px;display:flex;gap:11px"><span style="color:#b4b4b4">0 events</span><span style="color:#76b900;font-weight:bold;font-size:10.1px">0%</span></div>
<div class="box" style="left:218.5px;top:832.67px;width:933.5px;height:5.7px;background:#2a2a2a;border-radius:3px;overflow:hidden"><div style="width:0%;height:5.7px;background:linear-gradient(to right,#76b900,#8acf00)"></div></div>
<div class="box" style="left:200px;top:871.5px;width:970px;height:300px;background:#1a1a1a;border:1px solid #2a4466"></div>
<svg class="ic" style="left:218.5px;top:890.5px;width:12.5px;height:12.5px" viewBox="0 0 24 24" fill="none" stroke="#76b900" stroke-width="2" stroke-linecap="round" stroke-linejoin="round"><path d="M15 14c.2-1 .7-1.7 1.5-2.5 1-.9 1.5-2.2 1.5-3.5A6 6 0 0 0 6 8c0 1 .2 2.2 1.5 3.5.7.7 1.3 1.5 1.5 2.5"/><path d="M9 18h6"/><path d="M10 22h4"/></svg>
<div class="t" style="left:237.7px;top:891.10px;font-size:11.1px;line-height:11.1px;color:#ffffff;font-weight:bold">Prompt Improvement Recommendations</div>
<div class="t" style="right:39px;top:891.70px;font-size:10.4px;line-height:10.4px;color:#a3a3a3;font-weight:normal">From 64 events</div>
</div></div>
<div class="box" style="left:1191px;top:0;width:9px;height:1166px;background:#1b1b1b"></div>
<div class="box" style="left:1191.5px;top:-10px;width:8.5px;height:451px;background:#3d3d3d;border-radius:4.25px"></div>
<div class="box" style="left:1191.5px;top:992.5px;width:8.5px;height:185px;background:#3d3d3d;border-radius:4.25px"></div>
</body></html>
